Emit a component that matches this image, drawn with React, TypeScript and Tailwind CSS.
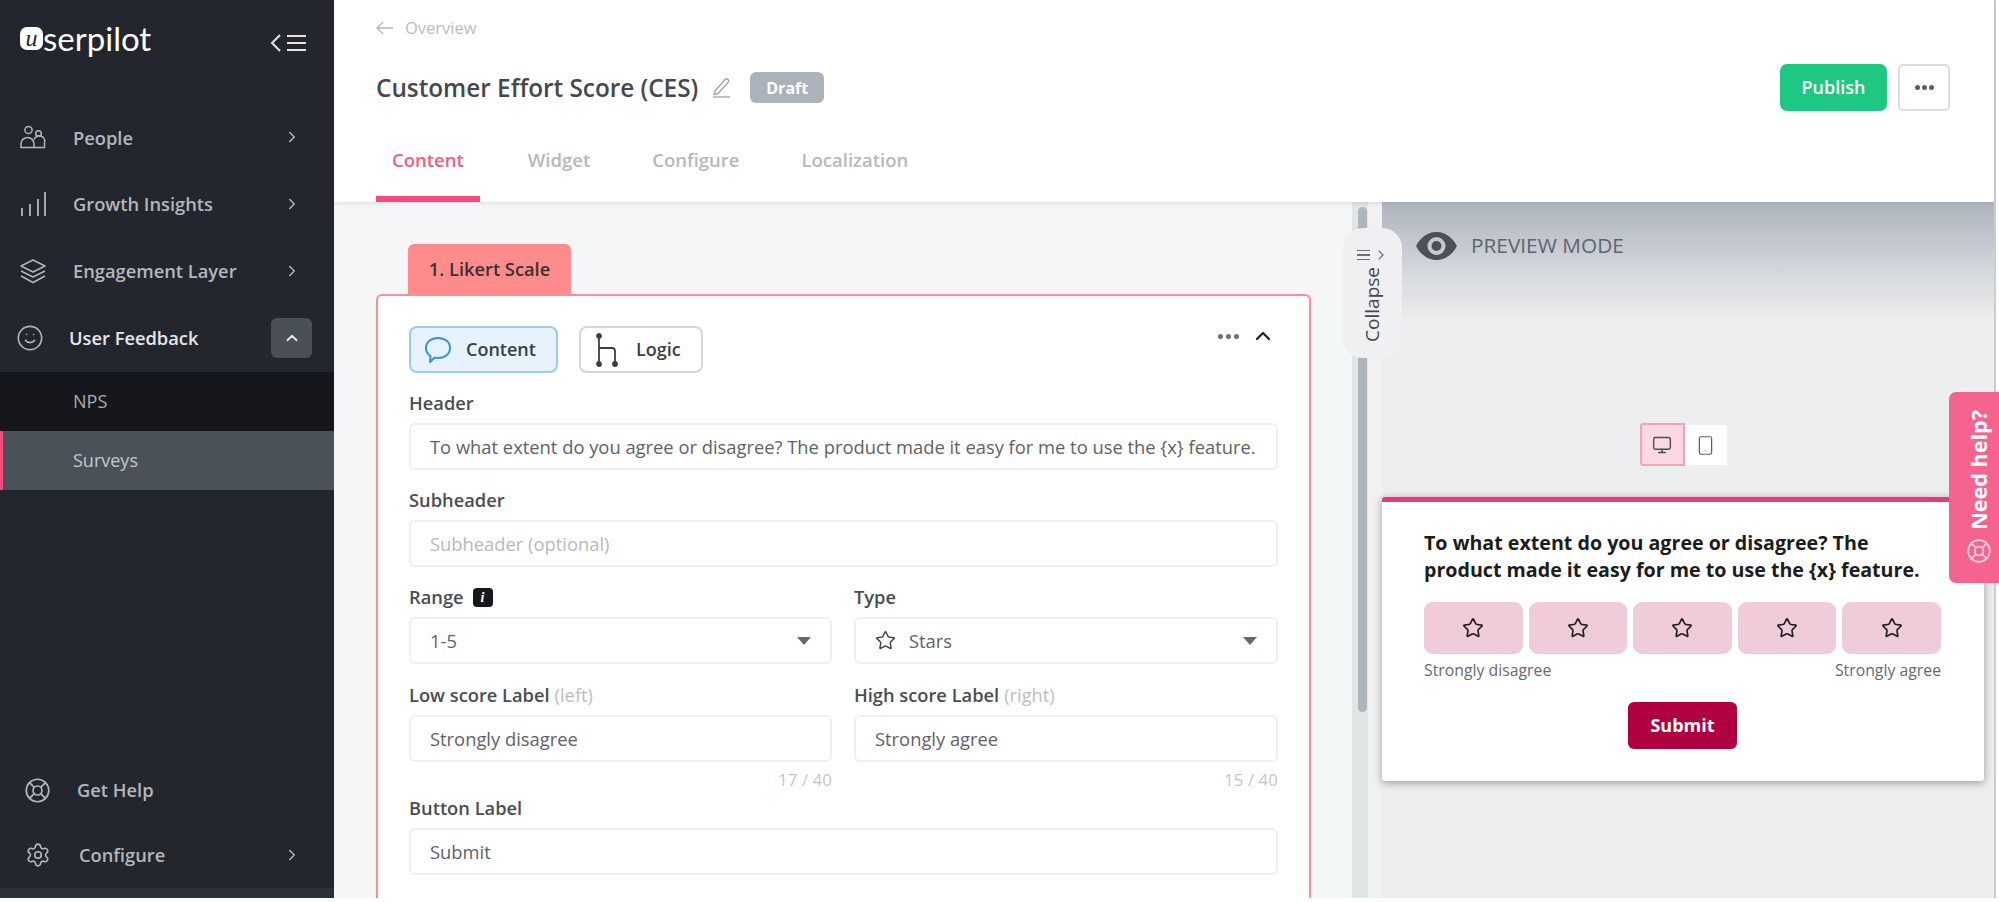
import { ChevronRight, ChevronUp, LifeBuoy, Monitor, Settings, Smartphone, Smile, Star } from "lucide-react";

const sans = "font-['Open_Sans',sans-serif]";

function PeopleIcon() {
  return (
    <svg width="26" height="24" viewBox="0 0 26 24" fill="none" stroke="currentColor" strokeWidth="1.5">
      <circle cx="8.5" cy="5" r="3.6" />
      <circle cx="18.5" cy="8.5" r="2.8" />
      <path d="M1 22.5v-3.5a6.5 6.5 0 0 1 13 0v3.5z" />
      <path d="M14 14.500a5.200 5.200 0 0 1 10.500 3.500v4.500H14" />
    </svg>
  );
}

function BarsIcon() {
  return (
    <svg width="26" height="26" viewBox="0 0 26 26" fill="none" stroke="currentColor" strokeWidth="1.8">
      <path d="M2 25v-8M10 25V13M18 25V8M25 25V1" />
    </svg>
  );
}

function LayersIcon() {
  return (
    <svg width="26" height="26" viewBox="0 0 26 26" fill="none" stroke="currentColor" strokeWidth="1.5" strokeLinejoin="round">
      <path d="M13 2 25 8l-12 6L1 8z" />
      <path d="M1 13l12 6 12-6" />
      <path d="M1 18l12 6.500L25 18" />
    </svg>
  );
}

function PencilIcon() {
  return (
    <svg width="19" height="21" viewBox="0 0 19 21" fill="none" stroke="#9ea2a7" strokeWidth="1.3" strokeLinejoin="round">
      <path d="M3 14 13 2.500c1-1 2-1 3 0s1 2 0 3L6 16.500l-4 1z" />
      <path d="M1 20h17" />
    </svg>
  );
}

function LogicIcon() {
  return (
    <svg width="22" height="34" viewBox="0 0 22 34" fill="none" stroke="#3b3e43" strokeWidth="1.8">
      <path d="M3 3v28M3 15h13a3 3 0 0 1 3 3v13" />
      <circle cx="3" cy="3" r="2" fill="#3b3e43" />
      <circle cx="3" cy="31" r="2" fill="#3b3e43" />
      <circle cx="19" cy="31" r="2" fill="#3b3e43" />
    </svg>
  );
}

function BubbleIcon() {
  return (
    <svg width="28" height="28" viewBox="0 0 28 28" fill="none" stroke="#3a8fdc" strokeWidth="2" strokeLinejoin="round">
      <path d="M14 2c7 0 12 4 12 10s-5 10-12 10c-1.200 0-2.300-.1-3.300-.4L6 26l.5-6C3.500 18 2 15.200 2 12 2 6 7 2 14 2z" />
    </svg>
  );
}

function EyeIcon() {
  return (
    <svg width="41" height="28" viewBox="0 0 41 28" fill="#4c5159">
      <path
        fillRule="evenodd"
        d="M20.500 0C31 0 38 8 41 14c-3 6-10 14-20.500 14S3 20 0 14C3 8 10 0 20.500 0zm0 5a9 9 0 1 0 0 18 9 9 0 0 0 0-18zm0 4a5 5 0 1 1 0 10 5 5 0 0 1 0-10z"
      />
    </svg>
  );
}

function MenuLines({ w, gap, thick }: { w: string; gap: string; thick: string }) {
  return (
    <div className={`flex flex-col ${gap} ${w}`}>
      <div className={`${thick} bg-current`} />
      <div className={`${thick} bg-current`} />
      <div className={`${thick} bg-current`} />
    </div>
  );
}

function NavItem({ icon, label }: { icon: React.ReactNode; label: string }) {
  return (
    <div className="flex h-[66.700px] items-center pl-[20px] pr-[33px] text-[#b4b7ba]">
      <div className="flex w-[53px] items-center">{icon}</div>
      <span className="flex-1 text-[18.300px] font-semibold">{label}</span>
      <ChevronRight size={18} strokeWidth={2} />
    </div>
  );
}

function Sidebar() {
  return (
    <aside className={`flex w-[334px] shrink-0 flex-col bg-[#23262d] ${sans}`}>
      <div className="flex h-[104px] items-start justify-between pl-[20px] pr-[28px] pt-[18px]">
        <div className="flex items-center text-white">
          <span className="flex h-[23px] w-[23px] items-center justify-center rounded-[7px] bg-white font-['Liberation_Serif',serif] text-[24px] italic leading-none text-[#23262d]">
            u
          </span>
          <span className="font-['Lato',sans-serif] text-[33px] leading-[40px] font-normal">serpilot</span>
        </div>
        <div className="mt-[15px] flex items-center gap-[5px] text-[#e4e5e6]">
          <svg width="12" height="20" viewBox="0 0 12 20" fill="none" stroke="currentColor" strokeWidth="2">
            <path d="M10 2 2 10l8 8" />
          </svg>
          <MenuLines w="w-[19px]" gap="gap-[5px]" thick="h-[2px]" />
        </div>
      </div>
      <NavItem icon={<PeopleIcon />} label="People" />
      <NavItem icon={<BarsIcon />} label="Growth Insights" />
      <NavItem icon={<LayersIcon />} label="Engagement Layer" />
      <div className="flex h-[67.900px] items-center pl-[16px] pr-[22px] text-[#e6e7e8]">
        <div className="flex w-[53px] text-[#b4b7ba]">
          <Smile size={28} strokeWidth={1.4} />
        </div>
        <span className="flex-1 text-[18.300px] font-semibold">User Feedback</span>
        <div className="flex h-[40px] w-[41px] items-center justify-center rounded-[6px] bg-[#4a5058]">
          <ChevronUp size={18} strokeWidth={2.4} />
        </div>
      </div>
      <div className="flex h-[59px] items-center bg-[#15171c] pl-[73px] pt-[1px] text-[18px] font-medium text-[#a9acb0]">NPS</div>
      <div className="flex h-[59px] items-center border-l-[3px] border-[#f7497c] bg-[#4a5158] pl-[70px] text-[18px] font-medium text-[#c6c8cb]">
        Surveys
      </div>
      <div className="flex-1" />
      <div className="flex h-[64px] items-center pl-[24px] text-[#b4b7ba]">
        <div className="w-[53px]">
          <LifeBuoy size={27} strokeWidth={1.5} />
        </div>
        <span className="text-[18.300px] font-semibold">Get Help</span>
      </div>
      <div className="flex h-[66px] items-center pl-[25px] pr-[33px] text-[#b4b7ba]">
        <div className="w-[54px]">
          <Settings size={26} strokeWidth={1.5} />
        </div>
        <span className="flex-1 text-[18.300px] font-semibold">Configure</span>
        <ChevronRight size={18} strokeWidth={2} />
      </div>
      <div className="h-[10px] bg-[#2d3037]" />
    </aside>
  );
}

function Header() {
  return (
    <header className="relative z-10 h-[202px] shrink-0 bg-white pl-[42px] pr-[44px] pt-[16px] shadow-[0_2px_4px_rgba(0,0,0,0.08)]">
      <div className="flex h-[24px] items-center gap-[12px] text-[16.500px] text-[#b9bcc0]">
        <svg width="17" height="14" viewBox="0 0 17 14" fill="none" stroke="#b4b7bb" strokeWidth="1.4">
          <path d="M7 1 1 7l6 6M1 7h16" />
        </svg>
        Overview
      </div>
      <div className="mt-[24px] flex h-[47px] items-center">
        <h1 className="mt-[2px] text-[24.300px] font-semibold text-[#45484d]">Customer Effort Score (CES)</h1>
        <div className="ml-[14px]">
          <PencilIcon />
        </div>
        <span className="ml-[19px] flex h-[31px] w-[74px] items-center justify-center rounded-[6px] bg-[#abb2bc] text-[16px] font-bold text-white">
          Draft
        </span>
        <div className="flex-1" />
        <button className="h-[47px] w-[107px] rounded-[7px] bg-[#1fc882] text-[18px] font-semibold text-white">Publish</button>
        <button className="ml-[11px] flex h-[47px] w-[52px] items-center justify-center gap-[2px] rounded-[5px] border-2 border-[#dcdde0]">
          <span className="h-[5px] w-[5px] rounded-full bg-[#5b5e63]" />
          <span className="h-[5px] w-[5px] rounded-full bg-[#5b5e63]" />
          <span className="h-[5px] w-[5px] rounded-full bg-[#5b5e63]" />
        </button>
      </div>
      <nav className="mt-[37px] flex gap-[30px] text-[18.500px] font-semibold text-[#b5b8bc]">
        <div className="mr-[2px] border-b-[6px] border-[#f7497c] px-[16px] pb-[24px] leading-[24px] text-[#f45b85]">Content</div>
        <div className="px-[16px] leading-[24px]">Widget</div>
        <div className="px-[16px] leading-[24px]">Configure</div>
        <div className="px-[16px] leading-[24px]">Localization</div>
      </nav>
    </header>
  );
}

function Label({ children, hint }: { children: React.ReactNode; hint?: string }) {
  return (
    <div className="flex h-[24px] items-center text-[18.300px] font-semibold text-[#4a4d52]">
      {children}
      {hint && <span className="ml-[5px] font-normal text-[#bcbec1]">{hint}</span>}
    </div>
  );
}

function Box({ children, muted }: { children?: React.ReactNode; muted?: boolean }) {
  return (
    <div
      className={`mt-[8px] flex h-[47px] items-center rounded-[6px] border-2 border-[#eeeff1] bg-white px-[19px] text-[18.350px] ${
        muted ? "text-[#b7b9bc]" : "text-[#5f6266]"
      }`}
    >
      {children}
    </div>
  );
}

function Caret() {
  return <span className="ml-auto h-0 w-0 border-x-[7px] border-t-[8px] border-x-transparent border-t-[#64676c]" />;
}

function Form() {
  return (
    <div className="flex w-[1018px] shrink-0 flex-col bg-[#f5f6f7] pl-[42px] pt-[42px]">
      <div className="ml-[32px] flex h-[50px] w-[163px] items-center justify-center rounded-t-[6px] bg-[#ff8c8c] text-[18.300px] font-semibold text-[#3c3033]">
        1. Likert Scale
      </div>
      <div className="w-[935px] flex-1 rounded-t-[6px] border-2 border-b-0 border-[#ff8f8f] bg-white pl-[31px] pr-[31px] pt-[30px]">
        <div className="flex items-center">
          <div className="flex h-[47px] w-[149px] items-center gap-[14px] rounded-[8px] border-2 border-[#9ccaf0] bg-[#e6f3fd] pl-[13px] text-[18px] font-semibold text-[#3b3e43]">
            <BubbleIcon />
            Content
          </div>
          <div className="ml-[21px] flex h-[47px] w-[124px] items-center gap-[18px] rounded-[8px] border-2 border-[#d5d6d9] pl-[15px] text-[18px] font-semibold text-[#3b3e43]">
            <LogicIcon />
            Logic
          </div>
          <div className="ml-auto mt-[8px] flex items-center gap-[3px] self-start">
            <span className="h-[5px] w-[5px] rounded-full bg-[#6c6f73]" />
            <span className="h-[5px] w-[5px] rounded-full bg-[#6c6f73]" />
            <span className="h-[5px] w-[5px] rounded-full bg-[#6c6f73]" />
          </div>
          <ChevronUp className="-mt-[2px] ml-[12px] mr-[3px] self-start text-[#23262d]" size={24} strokeWidth={2.4} />
        </div>
        <div className="mt-[18px]">
          <Label>Header</Label>
          <Box>To what extent do you agree or disagree? The product made it easy for me to use the {"{x}"} feature.</Box>
        </div>
        <div className="mt-[18px]">
          <Label>Subheader</Label>
          <Box muted>Subheader (optional)</Box>
        </div>
        <div className="mt-[18px] grid grid-cols-[423px_424px] gap-x-[22px]">
          <div>
            <Label>
              Range
              <span className="ml-[9px] flex h-[19px] w-[20px] items-center justify-center rounded-[4px] bg-[#17181b] font-['Liberation_Serif',serif] text-[14px] font-bold italic text-white">
                i
              </span>
            </Label>
            <Box>
              1-5
              <Caret />
            </Box>
          </div>
          <div>
            <Label>Type</Label>
            <Box>
              <Star className="mr-[13px] text-[#3b3e43]" size={21} strokeWidth={1.6} />
              Stars
              <Caret />
            </Box>
          </div>
          <div className="mt-[19px]">
            <Label hint="(left)">Low score Label</Label>
            <Box>Strongly disagree</Box>
            <div className="mt-[8px] h-[20px] text-right text-[17px] leading-[20px] text-[#c4c6c9]">17 / 40</div>
          </div>
          <div className="mt-[19px]">
            <Label hint="(right)">High score Label</Label>
            <Box>Strongly agree</Box>
            <div className="mt-[8px] h-[20px] text-right text-[17px] leading-[20px] text-[#c4c6c9]">15 / 40</div>
          </div>
        </div>
        <div className="mt-[6px]">
          <Label>Button Label</Label>
          <Box>Submit</Box>
        </div>
      </div>
    </div>
  );
}

function Scrollbar() {
  return (
    <div className="flex w-[30px] shrink-0 bg-[#f0f1f2]">
      <div className="h-full w-[16px] bg-[#dfe6e5] pl-[6px] pt-[5px]">
        <div className="h-[505px] w-[9px] rounded-full bg-[#afb5bd]" />
      </div>
    </div>
  );
}

function Preview() {
  return (
    <div className="flex flex-1 flex-col bg-[#edeef0] pr-[10px]">
      <div className="-mr-[10px] flex h-[88px] shrink-0 items-center gap-[14px] bg-gradient-to-b from-[#aeb4bd] to-[#dfe1e4] pl-[34px] text-[20.800px] text-[#5c6570]">
        <EyeIcon />
        PREVIEW MODE
      </div>
      <div className="-mr-[10px] h-[30px] shrink-0 bg-gradient-to-b from-[#dcdee0] to-[#edeef0]" />
      <div className="mt-[103px] flex h-[43px] justify-center">
        <div className="flex h-[43px] w-[45px] items-center justify-center rounded-l-[3px] border-2 border-[#f6a3b5] bg-[#fcd9e2] text-[#4a4d52]">
          <Monitor size={20} strokeWidth={1.7} />
        </div>
        <div className="mt-[2px] flex h-[40px] w-[42px] items-center justify-center bg-white text-[#5f6266]">
          <Smartphone size={21} strokeWidth={1.4} />
        </div>
      </div>
      <div className="mt-[31px] h-[284px] rounded-[3px] border-t-[5px] border-[#e8397a] bg-white pl-[42px] pr-[43px] pt-[27px] shadow-[0_2px_8px_rgba(0,0,0,0.35)]">
        <p className="whitespace-nowrap text-[19.650px] leading-[27px] font-bold text-[#1c1c1c]">
          To what extent do you agree or disagree? The
          <br />
          product made it easy for me to use the {"{x}"} feature.
        </p>
        <div className="mt-[19px] grid grid-cols-5 gap-[6px]">
          {[0, 1, 2, 3, 4].map((i) => (
            <div key={i} className="flex h-[52px] items-center justify-center rounded-[9px] bg-[#f0cbda] text-[#1f1f22]">
              <Star size={22} strokeWidth={1.8} />
            </div>
          ))}
        </div>
        <div className="mt-[7px] flex h-[20px] items-center justify-between text-[15.800px] text-[#666a6e]">
          <span>Strongly disagree</span>
          <span>Strongly agree</span>
        </div>
        <div className="mt-[21px] flex justify-center">
          <button className="h-[47px] w-[109px] rounded-[6px] bg-[#b10040] text-[18px] font-bold text-white">Submit</button>
        </div>
      </div>
    </div>
  );
}

export default function App() {
  return (
    <div className={`relative h-[902px] w-full overflow-hidden bg-white ${sans}`}>
      <div className="flex h-[898px]">
        <Sidebar />
        <main className="flex min-w-0 flex-1 flex-col">
          <Header />
          <div className="flex min-h-0 flex-1 overflow-hidden">
            <Form />
            <Scrollbar />
            <Preview />
          </div>
        </main>
        <div className="w-[5px] shrink-0 border-l-2 border-[#c9ccd1] bg-white" />
      </div>

      {/* collapse handle sits over the scrollbar */}
      <div className="absolute left-[1343px] top-[228px] z-20 flex h-[130px] w-[59px] flex-col items-center rounded-[20px] bg-[#f0f0f2] pt-[19px] text-[#44474c]">
        <div className="flex items-center gap-[3px] text-[#6b6e73]">
          <MenuLines w="w-[13px]" gap="gap-[3px]" thick="h-[1.500px]" />
          <ChevronRight size={16} strokeWidth={1.6} />
        </div>
        <span className="mt-[4px] rotate-180 text-[19px] leading-none font-medium [writing-mode:vertical-rl]">Collapse</span>
      </div>

      <div className="absolute right-0 top-[392px] z-20 flex h-[191px] w-[50px] flex-col items-center justify-end gap-[8px] rounded-l-[7px] bg-[#f5648f] pb-[19px] pl-[10px] text-white">
        <span className="rotate-180 text-[21.600px] leading-none font-bold [writing-mode:vertical-rl]">Need help?</span>
        <LifeBuoy className="text-[#fbd0dc]" size={26} strokeWidth={1.6} />
      </div>
    </div>
  );
}
